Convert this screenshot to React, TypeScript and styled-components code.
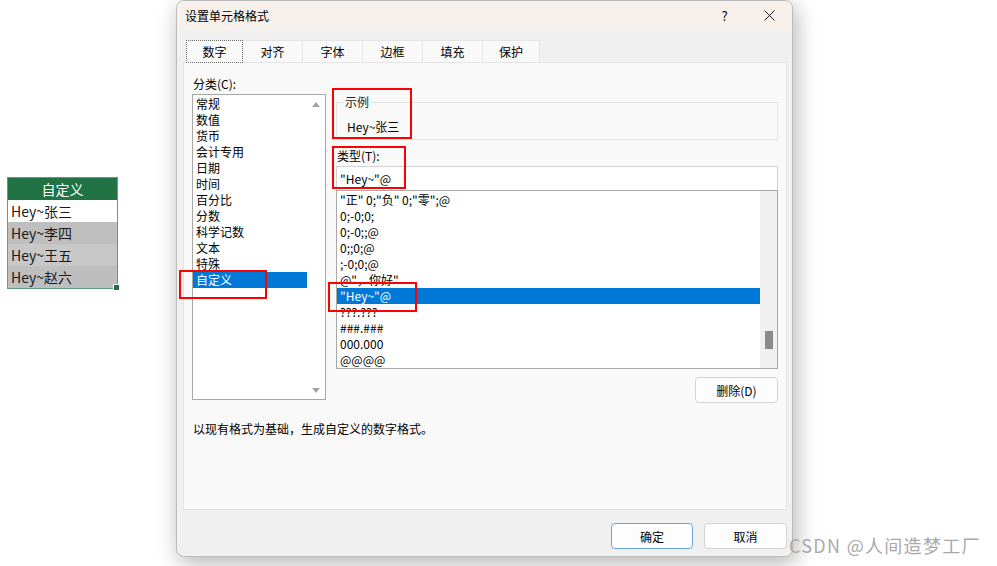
import React from "react";
import styled, { createGlobalStyle } from "styled-components";

const GlobalStyle = createGlobalStyle`
  html, body {
    margin: 0;
    padding: 0;
    background: #fff;
  }
  body {
    font-family: "Noto Sans CJK SC", "Noto Sans", sans-serif;
  }
`;

const Page = styled.div`
  position: relative;
  width: 997px;
  height: 566px;
  display: flex;
  align-items: flex-start;
  overflow: hidden;
  background: #fff;
  font-family: "Noto Sans CJK SC", "Noto Sans", sans-serif;
`;

// ---- little excel range on the left ----
const SheetPane = styled.div`
  width: 176px;
  flex-shrink: 0;
  box-sizing: border-box;
  padding: 177px 0 0 7px;
`;

const Sheet = styled.div`
  position: relative;
  width: 111px;
  box-sizing: border-box;
  border: 1px solid #5e9e79;
`;

const SheetHead = styled.div`
  height: 22px;
  background: #217346;
  color: #fff;
  font-size: 14px;
  display: flex;
  align-items: center;
  justify-content: center;
`;

const SheetRow = styled.div<{ $shade: string }>`
  height: 22px;
  background: ${(p) => p.$shade};
  color: #1a1a1a;
  font-size: 14px;
  padding-left: 3px;
  display: flex;
  align-items: center;
`;

const FillHandle = styled.span`
  position: absolute;
  right: -3px;
  bottom: -3px;
  width: 5px;
  height: 5px;
  background: #217346;
  border: 1px solid #fff;
`;

// ---- dialog ----
const Dialog = styled.div`
  position: relative;
  flex-shrink: 0;
  width: 617px;
  height: 557px;
  box-sizing: border-box;
  display: flex;
  flex-direction: column;
  background: #f0f0f0;
  border: 1px solid #bcbcbc;
  border-radius: 8px;
  box-shadow: 3px 6px 22px rgba(0, 0, 0, 0.3);
  overflow: hidden;
  font-size: 12px;
  color: #000;
`;

const TitleBar = styled.div`
  height: 29px;
  flex-shrink: 0;
  display: flex;
  align-items: center;
  padding-left: 8px;
  background: #f8f0ea;
`;

const Title = styled.span`
  flex: 1;
  margin-top: -1px;
`;

const CaptionButton = styled.div`
  width: 45px;
  height: 29px;
  display: flex;
  align-items: center;
  justify-content: center;
  font-size: 13px;
`;

const Body = styled.div`
  display: flex;
  flex-direction: column;
  padding: 10px 5px 0 6px;
`;

const TabRow = styled.div`
  position: relative;
  z-index: 1;
  display: flex;
  align-items: flex-start;
  height: 22px;
  margin-left: 3px;
`;

const Tab = styled.div<{ $active?: boolean; $w: number }>`
  width: ${(p) => p.$w}px;
  height: ${(p) => (p.$active ? 23 : 22)}px;
  box-sizing: border-box;
  display: flex;
  align-items: center;
  justify-content: center;
  background: #f9f9f9;
  border: ${(p) => (p.$active ? "1px dotted #6a6a6a" : "none")};
  border-top: 1px ${(p) => (p.$active ? "dotted #6a6a6a" : "solid #e4e4e4")};
  border-right: 1px ${(p) => (p.$active ? "dotted #6a6a6a" : "solid #e4e4e4")};
`;

const Panel = styled.div`
  height: 448px;
  box-sizing: border-box;
  background: #f9f9f9;
  border: 1px solid #e4e4e4;
  padding: 13px 8px 0;
  display: grid;
  grid-template-columns: 134px 442px;
  grid-template-rows: auto 1fr;
  column-gap: 10px;
  align-content: start;
`;

const Column = styled.div`
  display: flex;
  flex-direction: column;
`;

const FieldLabel = styled.div<{ $gap?: number }>`
  line-height: 16px;
  margin-top: ${(p) => p.$gap ?? 0}px;
  padding-left: 1px;
`;

const ListBox = styled.div<{ $h: number; $mt: number }>`
  display: flex;
  height: ${(p) => p.$h}px;
  margin-top: ${(p) => p.$mt}px;
  box-sizing: border-box;
  background: #fff;
  border: 1px solid #a8a8a8;
`;

const Items = styled.div`
  flex: 1;
  padding-top: 1px;
  overflow: hidden;
`;

const Item = styled.div<{ $selected?: boolean }>`
  height: 16px;
  line-height: 16px;
  padding-left: 3px;
  white-space: nowrap;
  background: ${(p) => (p.$selected ? "#0078d7" : "transparent")};
  color: ${(p) => (p.$selected ? "#fff" : "#000")};
`;

const ArrowTrack = styled.div`
  width: 18px;
  display: flex;
  flex-direction: column;
  align-items: center;
  justify-content: space-between;
  padding: 7px 0 6px;
`;

const ThumbTrack = styled.div`
  width: 17px;
  background: #f0f0f0;
  display: flex;
  flex-direction: column;
`;

const Thumb = styled.div`
  width: 8px;
  height: 18px;
  margin: 140px 0 0 5px;
  background: #8a8a8a;
`;

const Group = styled.fieldset`
  margin: 18px 0 0;
  padding: 0 0 4px 7px;
  border: 1px solid #e3e3e3;
  min-width: 0;
`;

const Legend = styled.legend`
  padding: 0 1px;
  line-height: 16px;
  color: #222;
`;

const SampleText = styled.div`
  line-height: 16px;
  padding: 9px 0 0 3px;
`;

const TypeInput = styled.div`
  height: 24px;
  margin-top: 2px;
  box-sizing: border-box;
  background: #fff;
  border: 1px solid #d2d2d2;
  border-bottom: none;
  padding-left: 3px;
  display: flex;
  align-items: center;
`;

const Button = styled.div<{ $primary?: boolean; $w: number }>`
  width: ${(p) => p.$w}px;
  height: 26px;
  box-sizing: border-box;
  display: flex;
  align-items: center;
  justify-content: center;
  background: #fdfdfd;
  border: 1px solid ${(p) => (p.$primary ? "#6aa7dd" : "#d3d3d3")};
  border-radius: 4px;
`;

const DeleteRow = styled.div`
  display: flex;
  justify-content: flex-end;
  margin-top: 8px;
`;

const Hint = styled.div`
  grid-column: 1 / -1;
  margin-top: 18px;
  padding-left: 1px;
  line-height: 16px;
`;

const Footer = styled.div`
  display: flex;
  justify-content: flex-end;
  gap: 11px;
  margin-top: 13px;
`;

const Mark = styled.div<{ $x: number; $y: number; $w: number; $h: number }>`
  position: absolute;
  left: ${(p) => p.$x}px;
  top: ${(p) => p.$y}px;
  width: ${(p) => p.$w}px;
  height: ${(p) => p.$h}px;
  box-sizing: border-box;
  border: 2px solid #f00;
  pointer-events: none;
`;

const Watermark = styled.div`
  position: absolute;
  left: 789px;
  top: 532px;
  font-size: 18px;
  color: #a9a9a9;
  letter-spacing: 1.3px;
  white-space: nowrap;
`;

const UpArrow = () => (
  <svg width="8" height="5" viewBox="0 0 8 5">
    <polygon points="0,5 4,0 8,5" fill="#a3a3a3" />
  </svg>
);

const DownArrow = () => (
  <svg width="8" height="5" viewBox="0 0 8 5">
    <polygon points="0,0 8,0 4,5" fill="#a3a3a3" />
  </svg>
);

const CloseIcon = () => (
  <svg width="11" height="11" viewBox="0 0 11 11">
    <path d="M0.5 0.5 L10.5 10.5 M10.5 0.5 L0.5 10.5" stroke="#1a1a1a" strokeWidth="1" />
  </svg>
);

const tabs = [
  { label: "数字", w: 57 },
  { label: "对齐", w: 60 },
  { label: "字体", w: 60 },
  { label: "边框", w: 60 },
  { label: "填充", w: 60 },
  { label: "保护", w: 57 },
];

const categories = [
  "常规", "数值", "货币", "会计专用", "日期", "时间",
  "百分比", "分数", "科学记数", "文本", "特殊", "自定义",
];

const formats = [
  '"正" 0;"负" 0;"零";@',
  "0;-0;0;",
  "0;-0;;@",
  "0;;0;@",
  ";-0;0;@",
  '@"，你好"',
  '"Hey~"@',
  "???.???",
  "###.###",
  "000.000",
  "@@@@",
];

const sheetRows = [
  { text: "Hey~张三", shade: "#ffffff" },
  { text: "Hey~李四", shade: "#bfbfbf" },
  { text: "Hey~王五", shade: "#c8c8c8" },
  { text: "Hey~赵六", shade: "#bebebe" },
];

export default function App() {
  return (
    <Page>
      <GlobalStyle />
      <SheetPane>
        <Sheet>
          <SheetHead>自定义</SheetHead>
          {sheetRows.map((r) => (
            <SheetRow key={r.text} $shade={r.shade}>
              {r.text}
            </SheetRow>
          ))}
          <FillHandle />
        </Sheet>
      </SheetPane>

      <Dialog>
        <TitleBar>
          <Title>设置单元格格式</Title>
          <CaptionButton>?</CaptionButton>
          <CaptionButton>
            <CloseIcon />
          </CaptionButton>
        </TitleBar>

        <Body>
          <TabRow>
            {tabs.map((t, i) => (
              <Tab key={t.label} $w={t.w} $active={i === 0}>
                {t.label}
              </Tab>
            ))}
          </TabRow>

          <Panel>
            <Column>
              <FieldLabel>分类(C):</FieldLabel>
              <ListBox $h={306} $mt={2}>
                <Items>
                  {categories.map((c) => (
                    <Item key={c} $selected={c === "自定义"}>
                      {c}
                    </Item>
                  ))}
                </Items>
                <ArrowTrack>
                  <UpArrow />
                  <DownArrow />
                </ArrowTrack>
              </ListBox>
            </Column>

            <Column>
              <Group>
                <Legend>示例</Legend>
                <SampleText>Hey~张三</SampleText>
              </Group>
              <FieldLabel $gap={8}>类型(T):</FieldLabel>
              <TypeInput>"Hey~"@</TypeInput>
              <ListBox $h={179} $mt={0}>
                <Items>
                  {formats.map((f) => (
                    <Item key={f} $selected={f === '"Hey~"@'}>
                      {f}
                    </Item>
                  ))}
                </Items>
                <ThumbTrack>
                  <Thumb />
                </ThumbTrack>
              </ListBox>
              <DeleteRow>
                <Button $w={83}>删除(D)</Button>
              </DeleteRow>
            </Column>

            <Hint>以现有格式为基础，生成自定义的数字格式。</Hint>
          </Panel>

          <Footer>
            <Button $w={82} $primary>
              确定
            </Button>
            <Button $w={83}>取消</Button>
          </Footer>
        </Body>

        <Mark $x={2} $y={269} $w={88} $h={29} />
        <Mark $x={155} $y={87} $w={80} $h={51} />
        <Mark $x={155} $y={145} $w={74} $h={43} />
        <Mark $x={151} $y={281} $w={89} $h={30} />
      </Dialog>

      <Watermark>CSDN @人间造梦工厂</Watermark>
    </Page>
  );
}
